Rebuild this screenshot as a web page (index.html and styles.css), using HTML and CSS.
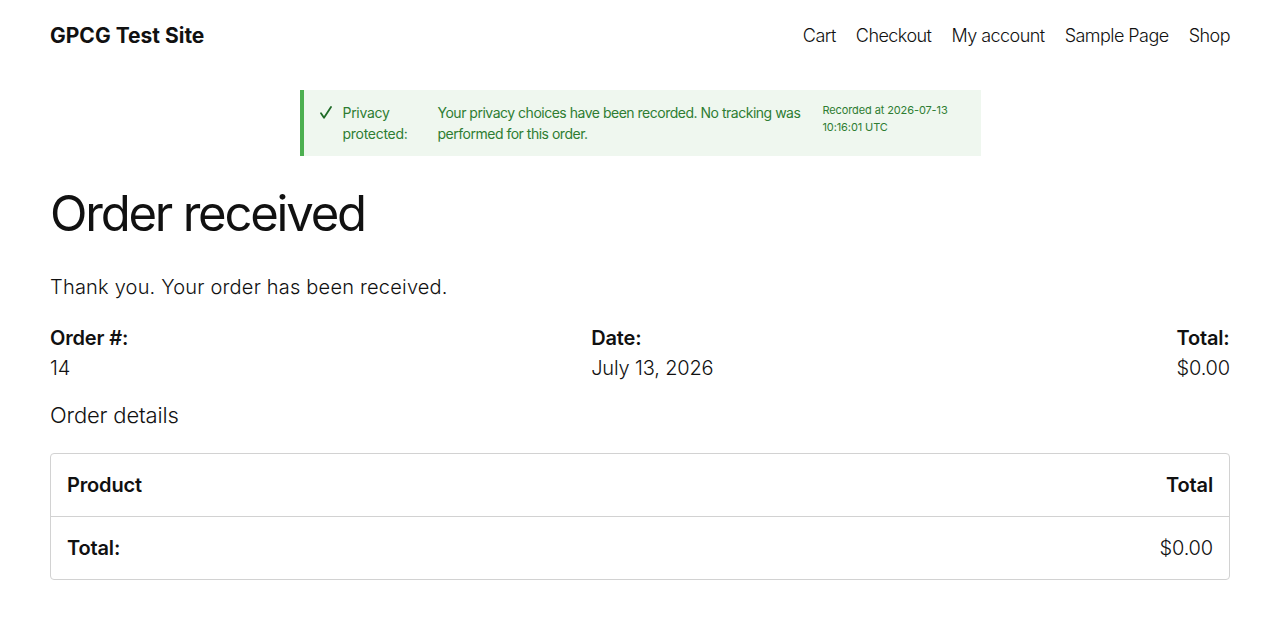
FILE: index.html
```html
<!DOCTYPE html>
<html lang="en">
<head>
    <meta charset="UTF-8">
    <meta name="viewport" content="width=device-width, initial-scale=1.0">
    <title>Order received – GPCG Test Site</title>
    <link rel="stylesheet" href="styles.css">
</head>
<body>
    <header class="site-header">
        <a class="site-title" href="#">GPCG Test Site</a>
        <nav class="site-nav">
            <a href="#">Cart</a>
            <a href="#">Checkout</a>
            <a href="#">My account</a>
            <a href="#">Sample Page</a>
            <a href="#">Shop</a>
        </nav>
    </header>

    <main class="content">
        <div class="privacy-notice">
            <span class="notice-check">
                <svg width="12" height="13" viewBox="0 0 12 13"><path d="M1 7.2 L4 11.8 L11 1" fill="none" stroke="currentColor" stroke-width="1.8" stroke-linecap="round" stroke-linejoin="round"/></svg>
            </span>
            <strong class="notice-label">Privacy protected:</strong>
            <span class="notice-text">Your privacy choices have been recorded. No tracking was performed for this order.</span>
            <span class="notice-time">Recorded at 2026-07-13 10:16:01 UTC</span>
        </div>

        <h1 class="page-title">Order received</h1>

        <p class="thanks">Thank you. Your order has been received.</p>

        <ul class="order-overview">
            <li>Order #:<strong>14</strong></li>
            <li>Date:<strong>July 13, 2026</strong></li>
            <li>Total:<strong>$0.00</strong></li>
        </ul>

        <h2 class="details-title">Order details</h2>

        <table class="order-table">
            <thead>
                <tr>
                    <th>Product</th>
                    <th class="num">Total</th>
                </tr>
            </thead>
            <tfoot>
                <tr>
                    <th>Total:</th>
                    <td class="num">$0.00</td>
                </tr>
            </tfoot>
        </table>
    </main>
</body>
</html>
```

FILE: styles.css
```css
body {
    margin: 0;
    font-family: Inter, "Noto Sans", sans-serif;
    color: #111111;
    background: #ffffff;
    letter-spacing: -0.01em;
}

a {
    color: inherit;
    text-decoration: none;
}

/* header */
.site-header {
    display: flex;
    justify-content: space-between;
    align-items: center;
    height: 70px;
    padding: 0 50px;
}

.site-title {
    font-size: 21px;
    font-weight: 700;
    letter-spacing: 0;
}

.site-nav {
    display: flex;
    gap: 20px;
    font-size: 18px;
    font-weight: 300;
    letter-spacing: -0.03em;
}

.content {
    padding: 20px 50px 0;
}

/* privacy notice */
.privacy-notice {
    display: flex;
    align-items: flex-start;
    max-width: 645px;
    margin: 0 auto;
    padding: 12px 16px 12px 16px;
    border-left: 4px solid #4caf50;
    background: #eff7ef;
    color: #2e7d32;
    font-size: 14px;
    line-height: 21px;
    letter-spacing: -0.02em;
}

.notice-check {
    display: flex;
    width: 23px;
    height: 21px;
    align-items: center;
    color: #1f6b27;
}

.notice-label {
    width: 95px;
    flex-shrink: 0;
    font-weight: 400;
}

.notice-text {
    width: 372px;
    flex-shrink: 0;
    margin-right: 13px;
    letter-spacing: -0.035em;
}

.notice-time {
    width: 135px;
    font-size: 11px;
    line-height: 17px;
    letter-spacing: -0.01em;
}

/* title */
.page-title {
    margin: 29px 0 0;
    font-size: 49px;
    font-weight: 400;
    line-height: 1.2;
    letter-spacing: -0.045em;
}

.thanks {
    margin: 29px 0 0;
    font-size: 20px;
    font-weight: 300;
    line-height: 1.4;
    letter-spacing: 0.01em;
}

.order-overview {
    display: flex;
    justify-content: space-between;
    margin: 22px 0 0;
    padding: 0;
    list-style: none;
    font-size: 20px;
    font-weight: 600;
    line-height: 30px;
}

.order-overview strong {
    display: block;
    font-weight: 300;
}

.details-title {
    margin: 17px 0 0;
    font-size: 22px;
    font-weight: 300;
    line-height: 1.4;
}

/* table */
.order-table {
    width: 100%;
    margin-top: 22px;
    border: 1px solid #d2d2d2;
    border-radius: 4px;
    border-spacing: 0;
    font-size: 20px;
}

.order-table th,
.order-table td {
    height: 62px;
    padding: 0 16px;
    text-align: left;
    font-weight: 600;
}

.order-table tfoot th,
.order-table tfoot td {
    border-top: 1px solid #d2d2d2;
}

.order-table td {
    font-weight: 300;
}

.order-table .num {
    text-align: right;
}
```
